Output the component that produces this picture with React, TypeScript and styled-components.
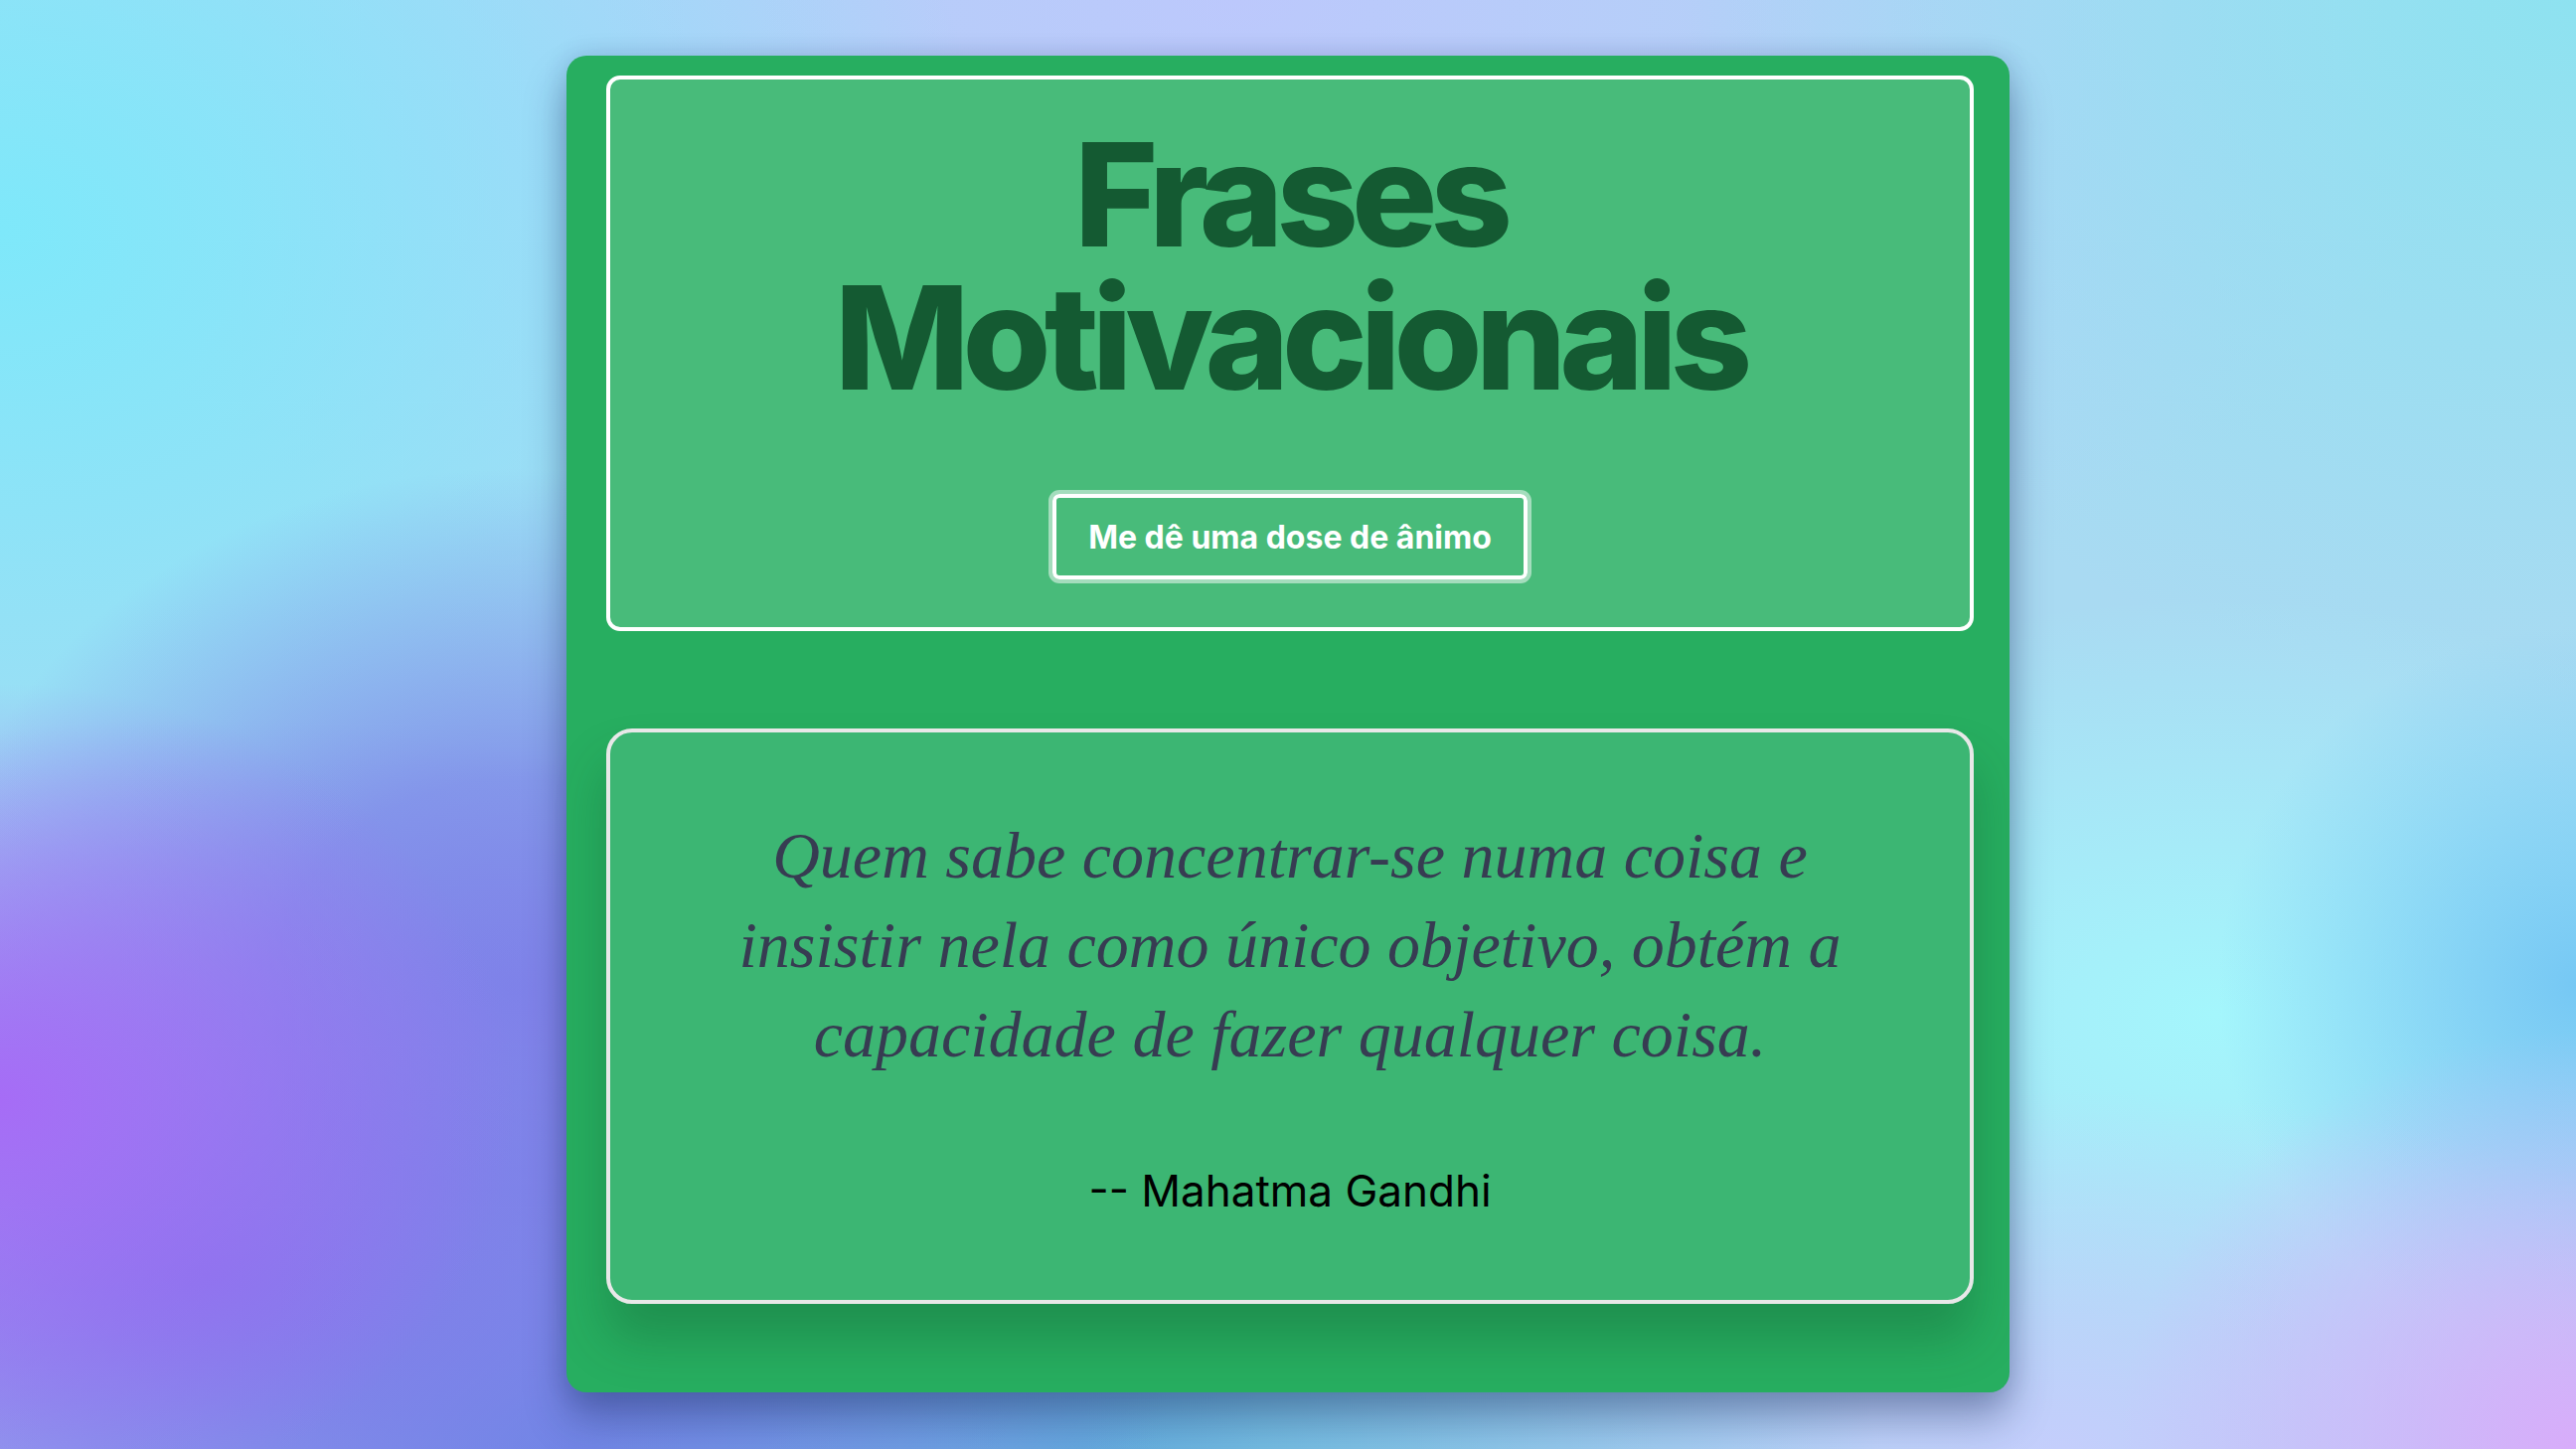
import React from 'react';
import styled, { createGlobalStyle } from 'styled-components';

const GlobalStyle = createGlobalStyle`
  html, body {
    margin: 0;
    padding: 0;
  }
  body {
    min-height: 100vh;
    font-family: Inter, "Noto Sans", "Liberation Sans", sans-serif;
    background-color: #a9daf2;
    background-image:
      radial-gradient(ellipse 520px 420px at 0% 76%, rgba(166, 108, 246, 1), rgba(166, 108, 246, 0) 100%),
      radial-gradient(ellipse 1000px 560px at 8% 88%, rgba(130, 120, 234, 1), rgba(130, 120, 234, 0) 100%),
      radial-gradient(ellipse 700px 420px at 22% 100%, rgba(96, 148, 226, 1), rgba(96, 148, 226, 0) 100%),
      radial-gradient(ellipse 600px 520px at 20% 68%, rgba(124, 136, 232, 1) 0%, rgba(124, 136, 232, 0.8) 40%, rgba(124, 136, 232, 0) 100%),
      radial-gradient(ellipse 800px 360px at 42% 100%, rgba(100, 178, 220, 1), rgba(100, 178, 220, 0) 100%),
      radial-gradient(ellipse 1000px 780px at 0% 16%, rgba(126, 232, 250, 1), rgba(126, 232, 250, 0) 100%),
      radial-gradient(ellipse 460px 420px at 100% 100%, rgba(216, 172, 250, 1), rgba(216, 172, 250, 0) 100%),
      radial-gradient(ellipse 800px 360px at 80% 100%, rgba(196, 206, 252, 1), rgba(196, 206, 252, 0) 100%),
      radial-gradient(ellipse 360px 360px at 100% 68%, rgba(118, 200, 244, 1), rgba(118, 200, 244, 0) 100%),
      radial-gradient(ellipse 700px 420px at 86% 70%, rgba(164, 246, 252, 1), rgba(164, 246, 252, 0) 100%),
      radial-gradient(ellipse 900px 700px at 100% 0%, rgba(142, 226, 240, 1), rgba(142, 226, 240, 0) 100%),
      radial-gradient(ellipse 1300px 700px at 48% 0%, rgba(188, 200, 252, 1), rgba(188, 200, 252, 0) 100%);
  }
`;

const Page = styled.main`
  display: flex;
  justify-content: center;
  align-items: flex-start;
  padding-top: 56px;
  min-height: 100vh;
  box-sizing: border-box;
`;

const Card = styled.section`
  width: 1452px;
  box-sizing: border-box;
  padding: 20px 36px 89px 40px;
  background: #27ae60;
  border-radius: 20px;
  box-shadow: 0 26px 40px rgba(20, 40, 90, 0.38), 0 0 24px rgba(20, 40, 90, 0.15);
  display: flex;
  flex-direction: column;
  gap: 98px;
`;

const Panel = styled.div<{ $variant: 'header' | 'quote' }>`
  box-sizing: border-box;
  display: flex;
  flex-direction: column;
  align-items: center;
  text-align: center;
  border: 4px solid ${(p) => (p.$variant === 'header' ? '#ffffff' : '#e8e8e8')};
  border-radius: ${(p) => (p.$variant === 'header' ? '14px' : '26px')};
  background: ${(p) => (p.$variant === 'header' ? '#48bb7a' : '#3cb673')};
  padding: ${(p) => (p.$variant === 'header' ? '44px 40px 48px' : '79px 40px 83px')};
  box-shadow: ${(p) => (p.$variant === 'quote' ? '0 36px 50px rgba(10, 70, 35, 0.28)' : 'none')};
`;

const Title = styled.h1`
  margin: 0 0 85px;
  font-family: Inter, "Noto Sans", sans-serif;
  font-weight: 800;
  font-size: 144px;
  line-height: 144px;
  letter-spacing: -7px;
  color: #145a32;
`;

const CheerButton = styled.button`
  height: 86px;
  padding: 0 32px;
  border: 4px solid #ffffff;
  border-radius: 7px;
  background: transparent;
  box-shadow: 0 0 0 4px rgba(255, 255, 255, 0.5);
  color: #ffffff;
  font-family: Inter, "Noto Sans", sans-serif;
  font-weight: 700;
  font-size: 32px;
  cursor: pointer;
`;

const Quote = styled.p`
  margin: 0 0 86px;
  max-width: 1160px;
  font-family: "Liberation Serif", "DejaVu Serif", serif;
  font-style: italic;
  font-size: 66px;
  line-height: 90px;
  color: #373c52;
`;

const Author = styled.p`
  margin: 0;
  font-family: Inter, "Noto Sans", sans-serif;
  font-size: 44px;
  line-height: 53px;
  color: #000000;
`;

export default function App() {
  return (
    <>
      <GlobalStyle />
      <Page>
        <Card>
          <Panel $variant="header">
            <Title>
              Frases
              <br />
              Motivacionais
            </Title>
            <CheerButton>Me dê uma dose de ânimo</CheerButton>
          </Panel>
          <Panel $variant="quote">
            <Quote>
              Quem sabe concentrar-se numa coisa e insistir nela como único objetivo, obtém a
              capacidade de fazer qualquer coisa.
            </Quote>
            <Author>-- Mahatma Gandhi</Author>
          </Panel>
        </Card>
      </Page>
    </>
  );
}
